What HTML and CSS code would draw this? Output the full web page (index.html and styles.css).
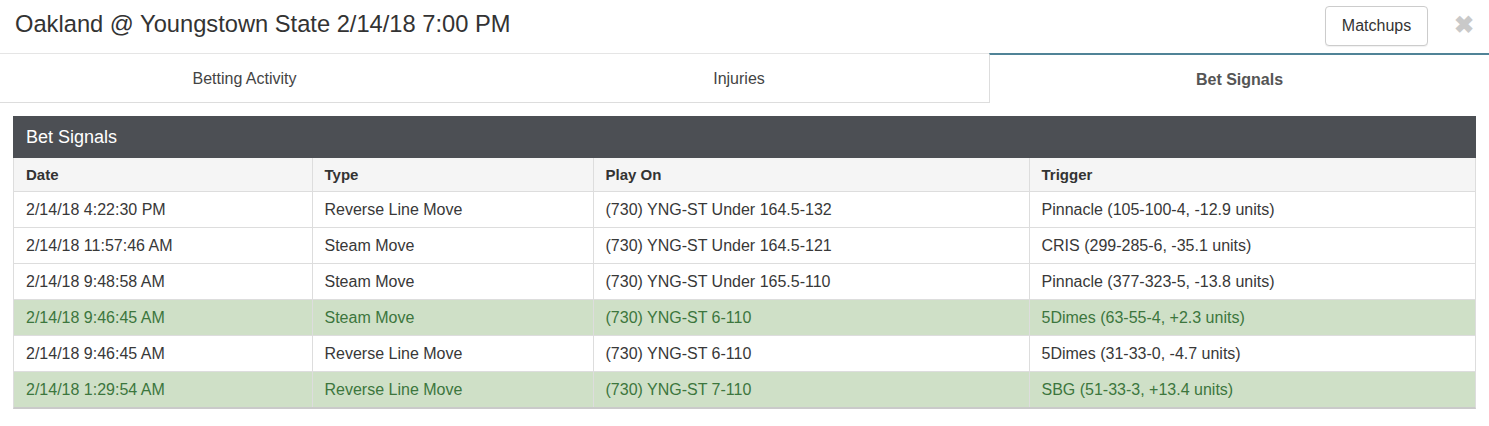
FILE: index.html
```html
<!DOCTYPE html>
<html>
<head>
<meta charset="utf-8">
<link rel="stylesheet" href="styles.css">
</head>
<body>
<div class="modal">
  <div class="modal-header">
    <h4 class="title">Oakland @ Youngstown State 2/14/18 7:00 PM</h4>
    <div class="actions">
      <button class="btn">Matchups</button>
      <span class="close">&#x2716;</span>
    </div>
  </div>
  <div class="tabs">
    <div class="tab">Betting Activity</div>
    <div class="tab">Injuries</div>
    <div class="tab active">Bet Signals</div>
  </div>
  <div class="modal-body">
    <div class="panel">
      <div class="panel-heading">Bet Signals</div>
      <table class="signals">
        <colgroup>
          <col class="c-date"><col class="c-type"><col class="c-play"><col class="c-trig">
        </colgroup>
        <thead>
          <tr><th>Date</th><th>Type</th><th>Play On</th><th>Trigger</th></tr>
        </thead>
        <tbody>
          <tr><td>2/14/18 4:22:30 PM</td><td>Reverse Line Move</td><td>(730) YNG-ST Under 164.5-132</td><td>Pinnacle (105-100-4, -12.9 units)</td></tr>
          <tr><td>2/14/18 11:57:46 AM</td><td>Steam Move</td><td>(730) YNG-ST Under 164.5-121</td><td>CRIS (299-285-6, -35.1 units)</td></tr>
          <tr><td>2/14/18 9:48:58 AM</td><td>Steam Move</td><td>(730) YNG-ST Under 165.5-110</td><td>Pinnacle (377-323-5, -13.8 units)</td></tr>
          <tr class="success"><td>2/14/18 9:46:45 AM</td><td>Steam Move</td><td>(730) YNG-ST 6-110</td><td>5Dimes (63-55-4, +2.3 units)</td></tr>
          <tr><td>2/14/18 9:46:45 AM</td><td>Reverse Line Move</td><td>(730) YNG-ST 6-110</td><td>5Dimes (31-33-0, -4.7 units)</td></tr>
          <tr class="success"><td>2/14/18 1:29:54 AM</td><td>Reverse Line Move</td><td>(730) YNG-ST 7-110</td><td>SBG (51-33-3, +13.4 units)</td></tr>
        </tbody>
      </table>
    </div>
  </div>
</div>
</body>
</html>
```
FILE: styles.css
```css
* { box-sizing: border-box; }
html, body { margin: 0; padding: 0; background: #fff; }
body {
  font-family: "Liberation Sans", Arial, sans-serif;
  font-size: 16px;
  color: #333;
  width: 1489px;
  height: 426px;
  overflow: hidden;
}
.modal-header {
  height: 54px;
  display: flex;
  align-items: center;
  justify-content: space-between;
  padding: 0 16px 0 15px;
  border-bottom: 1px solid #e5e5e5;
}
.title {
  margin: 0;
  font-size: 23.7px;
  font-weight: normal;
  color: #333;
  line-height: 1;
  position: relative;
  top: -2px;
}
.actions {
  display: flex;
  align-items: center;
  gap: 26px;
}
.btn {
  font-family: "Liberation Sans", Arial, sans-serif;
  font-size: 16px;
  color: #333;
  background: #fff;
  border: 1px solid #ccc;
  border-radius: 4px;
  height: 40px;
  width: 103px;
  padding: 0;
  box-shadow: 0 1px 1px rgba(0,0,0,0.06);
  margin-top: -2px;
}
.close {
  font-size: 24px;
  font-weight: bold;
  color: #c9c9c9;
  line-height: 1;
  margin-top: -4px;
  margin-right: -1px;
}
.tabs {
  display: grid;
  grid-template-columns: 489px 500px 1fr;
  height: 49px;
}
.tab {
  display: flex;
  align-items: center;
  justify-content: center;
  font-size: 16px;
  color: #444;
  border-bottom: 1px solid #ddd;
  padding-top: 1px;
}
.tab.active {
  font-weight: bold;
  color: #555;
  border-bottom: none;
  border-left: 1px solid #ddd;
  border-top: 2px solid #508397;
  margin-top: -1px;
  height: 50px;
}
.modal-body {
  padding: 13px 13px 0 13px;
}
.panel {
  border: 1px solid #ddd;
  border-top: none;
  border-bottom: 2px solid #cacaca;
}
.panel-heading {
  background: #4c4f54;
  color: #fff;
  font-size: 18px;
  height: 42px;
  line-height: 43px;
  padding: 0 13px;
  margin: 0 -1px;
}
.signals {
  width: 100%;
  border-collapse: collapse;
  table-layout: fixed;
}
.c-date { width: 298px; }
.c-type { width: 281px; }
.c-play { width: 436px; }
.c-trig { width: auto; }
.signals th {
  text-align: left;
  font-size: 15px;
  font-weight: bold;
  color: #333;
  background: #f5f5f5;
  height: 33px;
  padding: 0 12px;
  border-bottom: 1px solid #ddd;
  border-left: 1px solid #ddd;
}
.signals td {
  height: 36px;
  padding: 1px 12px 0;
  font-size: 16px;
  color: #383838;
  border-top: 1px solid #ddd;
  border-left: 1px solid #ddd;
}
.signals th:first-child, .signals td:first-child { border-left: none; }
.signals tbody tr:first-child td { border-top: none; }
.signals tr.success td {
  background: #cfe0c7;
  color: #3c763d;
}
```
